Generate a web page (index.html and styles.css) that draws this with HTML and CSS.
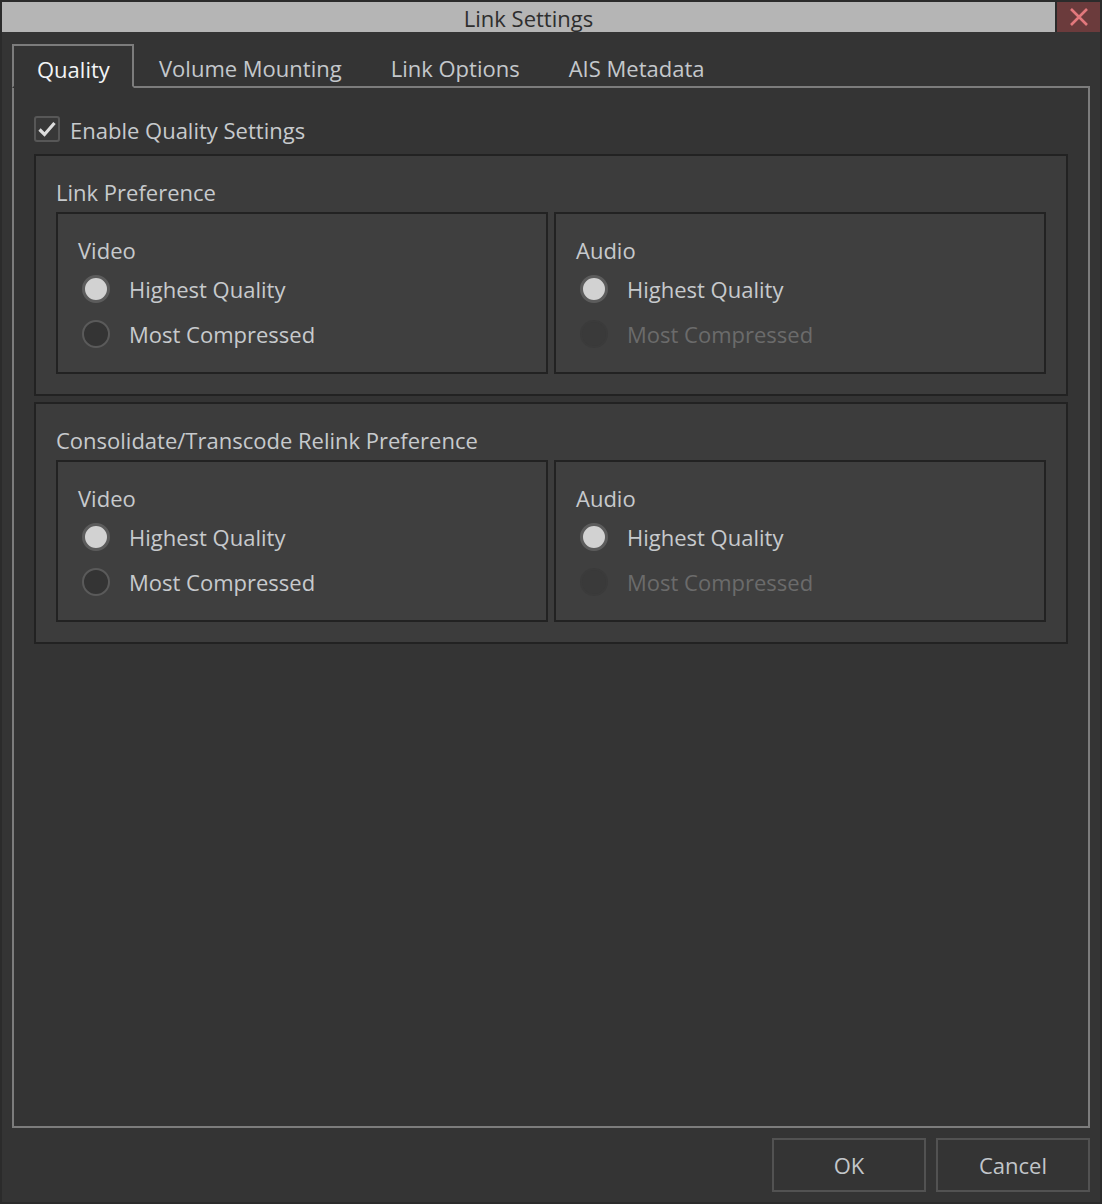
FILE: index.html
```html
<!DOCTYPE html>
<html>
<head>
<meta charset="utf-8">
<title>Link Settings</title>
<link rel="stylesheet" href="styles.css">
</head>
<body>
<div class="window">
  <div class="titlebar">
    <div class="title">Link Settings</div>
    <div class="close">
      <svg width="22" height="22" viewBox="0 0 22 22"><path d="M3 3 L19 19 M19 3 L3 19" stroke="#e2787c" stroke-width="2.6" fill="none"/></svg>
    </div>
  </div>
  <div class="content">
    <div class="tabs">
      <div class="tab active">Quality</div>
      <div class="tab">Volume Mounting</div>
      <div class="tab">Link Options</div>
      <div class="tab">AIS Metadata</div>
      <div class="tab-fill"></div>
    </div>
    <div class="pane">
      <label class="checkrow">
        <span class="checkbox"><svg width="22" height="22" viewBox="0 0 22 22"><path d="M3.5 11.5 L8.5 16.5 L18.5 5" stroke="#dcdcdc" stroke-width="3.2" fill="none"/></svg></span>
        <span class="label">Enable Quality Settings</span>
      </label>

      <div class="group">
        <div class="group-title">Link Preference</div>
        <div class="boxes">
          <div class="box">
            <div class="box-title">Video</div>
            <div class="radio-row"><span class="radio checked"></span><span class="label">Highest Quality</span></div>
            <div class="radio-row"><span class="radio"></span><span class="label">Most Compressed</span></div>
          </div>
          <div class="box">
            <div class="box-title">Audio</div>
            <div class="radio-row"><span class="radio checked"></span><span class="label">Highest Quality</span></div>
            <div class="radio-row disabled"><span class="radio"></span><span class="label">Most Compressed</span></div>
          </div>
        </div>
      </div>

      <div class="group">
        <div class="group-title">Consolidate/Transcode Relink Preference</div>
        <div class="boxes">
          <div class="box">
            <div class="box-title">Video</div>
            <div class="radio-row"><span class="radio checked"></span><span class="label">Highest Quality</span></div>
            <div class="radio-row"><span class="radio"></span><span class="label">Most Compressed</span></div>
          </div>
          <div class="box">
            <div class="box-title">Audio</div>
            <div class="radio-row"><span class="radio checked"></span><span class="label">Highest Quality</span></div>
            <div class="radio-row disabled"><span class="radio"></span><span class="label">Most Compressed</span></div>
          </div>
        </div>
      </div>
    </div>
    <div class="buttons">
      <div class="button">OK</div>
      <div class="button">Cancel</div>
    </div>
  </div>
</div>
</body>
</html>
```

FILE: styles.css
```css
* { box-sizing: border-box; }
html, body { margin: 0; padding: 0; }
body {
  background: #2b2b2b;
  font-family: "Open Sans", "Noto Sans", sans-serif;
  font-size: 22px;
  color: #c7cacd;
}
.window {
  width: 1102px;
  height: 1204px;
  border: 2px solid #2b2b2b;
  background: #343434;
  display: flex;
  flex-direction: column;
}
.titlebar {
  height: 30px;
  display: flex;
  background: #2b2b2b;
}
.title {
  flex: 1;
  background: #b5b5b5;
  color: #2e2e2e;
  text-align: center;
  line-height: 32px;
  font-size: 22px;
  margin-right: 2px;
}
.close {
  width: 43px;
  background: #6b3b3c;
  display: flex;
  align-items: center;
  justify-content: center;
}
.content {
  flex: 1;
  display: flex;
  flex-direction: column;
  padding: 12px 10px 10px 10px;
}
.tabs {
  display: flex;
  height: 44px;
  align-items: stretch;
}
.tab {
  padding: 5px 24px 0 25px;
  display: flex;
  align-items: center;
  border-bottom: 2px solid #7c7c7c;
  white-space: nowrap;
  color: #c4c8cc;
}
.tab.active {
  width: 122px;
  padding: 5px 0 0 23px;
  border: 2px solid #7c7c7c;
  border-bottom: 2px solid #343434;
  color: #f2f4f6;
}
.tab-fill {
  flex: 1;
  border-bottom: 2px solid #7c7c7c;
}
.pane {
  height: 1040px;
  border: 2px solid #7c7c7c;
  border-top: none;
  padding: 28px 20px 0 20px;
  display: flex;
  flex-direction: column;
  gap: 6px;
}
.checkrow {
  display: flex;
  align-items: center;
  height: 26px;
  margin-bottom: 6px;
}
.checkbox {
  width: 26px;
  height: 26px;
  border: 2px solid #575757;
  border-radius: 3px;
  background: #383838;
  display: flex;
  align-items: center;
  justify-content: center;
  margin-right: 10px;
}
.checkrow .label { color: #c7cacd; padding-top: 2px; }
.group {
  height: 242px;
  border: 2px solid #222222;
  background: #3c3c3c;
  padding: 0 20px 20px 20px;
  display: flex;
  flex-direction: column;
}
.group-title {
  height: 56px;
  padding-top: 20px;
  line-height: 32px;
}
.boxes {
  display: flex;
  gap: 6px;
  flex: 1;
}
.box {
  flex: 1;
  border: 2px solid #222222;
  background: #3f3f3f;
  padding: 20px 0 0 20px;
}
.box-title {
  height: 32px;
  line-height: 32px;
}
.radio-row {
  display: flex;
  align-items: center;
  height: 45px;
  margin-left: 4px;
}
.radio {
  width: 28px;
  height: 28px;
  border-radius: 50%;
  border: 2px solid #5a5a5a;
  background: #343434;
  margin-right: 19px;
}
.radio.checked {
  background: #d2d2d2;
  border: 3px solid #5c5c5c;
}
.radio-row .label { color: #c7cacd; }
.radio-row.disabled .radio {
  border-color: #3b3b3b;
  background: #3a3a3a;
}
.radio-row.disabled .label { color: #6b6b6b; }
.buttons {
  display: flex;
  justify-content: flex-end;
  gap: 10px;
  margin-top: 10px;
}
.button {
  width: 154px;
  height: 54px;
  border: 2px solid #525252;
  display: flex;
  align-items: center;
  justify-content: center;
  color: #c2c6ca;
}
```
